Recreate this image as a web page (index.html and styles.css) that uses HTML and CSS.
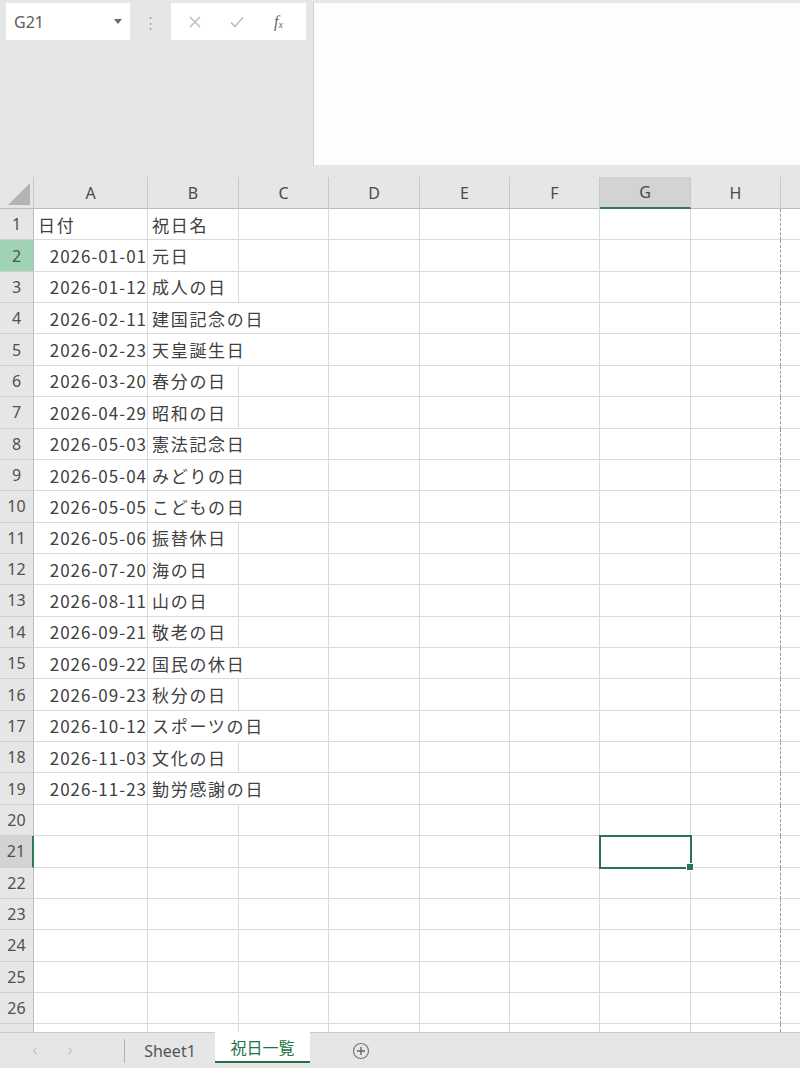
FILE: index.html
```html
<!DOCTYPE html>
<html lang="ja">
<head>
<meta charset="utf-8">
<title>祝日一覧</title>
<link rel="stylesheet" href="styles.css">
</head>
<body>
<div class="topbar">
  <div class="left-panel">
    <div class="name-row">
      <div class="name-box"><span>G21</span><span class="caret"></span></div>
      <div class="splitter">⋮</div>
      <div class="fx-tools">
        <svg class="tool" width="14" height="14" viewBox="0 0 14 14"><path d="M2 2 L12 12 M12 2 L2 12" stroke="#b8b8b8" stroke-width="1.4" fill="none"/></svg>
        <svg class="tool" width="16" height="14" viewBox="0 0 16 14"><path d="M2 7.5 L6 11.5 L14 2.5" stroke="#b8b8b8" stroke-width="1.4" fill="none"/></svg>
        <span class="fx">f<sub>x</sub></span>
      </div>
    </div>
  </div>
  <div class="formula"></div>
</div>

<div class="sheet">
  <div class="corner"><svg width="34" height="32" viewBox="0 0 34 32"><polygon points="8,28 30,28 30,6" fill="#b4b4b4"/></svg></div>
  <div class="ch">A</div><div class="ch">B</div><div class="ch">C</div><div class="ch">D</div><div class="ch">E</div><div class="ch">F</div><div class="ch ch-sel">G</div><div class="ch">H</div><div class="ch ch-last"></div>

  <div class="rh">1</div><div class="c">日付</div><div class="c">祝日名</div><div class="c"></div><div class="c"></div><div class="c"></div><div class="c"></div><div class="c"></div><div class="c brk"></div><div class="c end"></div>
  <div class="rh rh-green">2</div><div class="c num">2026-01-01</div><div class="c">元日</div><div class="c"></div><div class="c"></div><div class="c"></div><div class="c"></div><div class="c"></div><div class="c brk"></div><div class="c end"></div>
  <div class="rh">3</div><div class="c num">2026-01-12</div><div class="c">成人の日</div><div class="c"></div><div class="c"></div><div class="c"></div><div class="c"></div><div class="c"></div><div class="c brk"></div><div class="c end"></div>
  <div class="rh">4</div><div class="c num">2026-02-11</div><div class="c span2">建国記念の日</div><div class="c"></div><div class="c"></div><div class="c"></div><div class="c"></div><div class="c brk"></div><div class="c end"></div>
  <div class="rh">5</div><div class="c num">2026-02-23</div><div class="c span2">天皇誕生日</div><div class="c"></div><div class="c"></div><div class="c"></div><div class="c"></div><div class="c brk"></div><div class="c end"></div>
  <div class="rh">6</div><div class="c num">2026-03-20</div><div class="c">春分の日</div><div class="c"></div><div class="c"></div><div class="c"></div><div class="c"></div><div class="c"></div><div class="c brk"></div><div class="c end"></div>
  <div class="rh">7</div><div class="c num">2026-04-29</div><div class="c">昭和の日</div><div class="c"></div><div class="c"></div><div class="c"></div><div class="c"></div><div class="c"></div><div class="c brk"></div><div class="c end"></div>
  <div class="rh">8</div><div class="c num">2026-05-03</div><div class="c span2">憲法記念日</div><div class="c"></div><div class="c"></div><div class="c"></div><div class="c"></div><div class="c brk"></div><div class="c end"></div>
  <div class="rh">9</div><div class="c num">2026-05-04</div><div class="c span2">みどりの日</div><div class="c"></div><div class="c"></div><div class="c"></div><div class="c"></div><div class="c brk"></div><div class="c end"></div>
  <div class="rh">10</div><div class="c num">2026-05-05</div><div class="c span2">こどもの日</div><div class="c"></div><div class="c"></div><div class="c"></div><div class="c"></div><div class="c brk"></div><div class="c end"></div>
  <div class="rh">11</div><div class="c num">2026-05-06</div><div class="c">振替休日</div><div class="c"></div><div class="c"></div><div class="c"></div><div class="c"></div><div class="c"></div><div class="c brk"></div><div class="c end"></div>
  <div class="rh">12</div><div class="c num">2026-07-20</div><div class="c">海の日</div><div class="c"></div><div class="c"></div><div class="c"></div><div class="c"></div><div class="c"></div><div class="c brk"></div><div class="c end"></div>
  <div class="rh">13</div><div class="c num">2026-08-11</div><div class="c">山の日</div><div class="c"></div><div class="c"></div><div class="c"></div><div class="c"></div><div class="c"></div><div class="c brk"></div><div class="c end"></div>
  <div class="rh">14</div><div class="c num">2026-09-21</div><div class="c">敬老の日</div><div class="c"></div><div class="c"></div><div class="c"></div><div class="c"></div><div class="c"></div><div class="c brk"></div><div class="c end"></div>
  <div class="rh">15</div><div class="c num">2026-09-22</div><div class="c span2">国民の休日</div><div class="c"></div><div class="c"></div><div class="c"></div><div class="c"></div><div class="c brk"></div><div class="c end"></div>
  <div class="rh">16</div><div class="c num">2026-09-23</div><div class="c">秋分の日</div><div class="c"></div><div class="c"></div><div class="c"></div><div class="c"></div><div class="c"></div><div class="c brk"></div><div class="c end"></div>
  <div class="rh">17</div><div class="c num">2026-10-12</div><div class="c span2">スポーツの日</div><div class="c"></div><div class="c"></div><div class="c"></div><div class="c"></div><div class="c brk"></div><div class="c end"></div>
  <div class="rh">18</div><div class="c num">2026-11-03</div><div class="c">文化の日</div><div class="c"></div><div class="c"></div><div class="c"></div><div class="c"></div><div class="c"></div><div class="c brk"></div><div class="c end"></div>
  <div class="rh">19</div><div class="c num">2026-11-23</div><div class="c span2">勤労感謝の日</div><div class="c"></div><div class="c"></div><div class="c"></div><div class="c"></div><div class="c brk"></div><div class="c end"></div>
  <div class="rh">20</div><div class="c"></div><div class="c"></div><div class="c"></div><div class="c"></div><div class="c"></div><div class="c"></div><div class="c"></div><div class="c brk"></div><div class="c end"></div>
  <div class="rh rh-sel">21</div><div class="c"></div><div class="c"></div><div class="c"></div><div class="c"></div><div class="c"></div><div class="c"></div><div class="c sel"></div><div class="c brk"></div><div class="c end"></div>
  <div class="rh">22</div><div class="c"></div><div class="c"></div><div class="c"></div><div class="c"></div><div class="c"></div><div class="c"></div><div class="c"></div><div class="c brk"></div><div class="c end"></div>
  <div class="rh">23</div><div class="c"></div><div class="c"></div><div class="c"></div><div class="c"></div><div class="c"></div><div class="c"></div><div class="c"></div><div class="c brk"></div><div class="c end"></div>
  <div class="rh">24</div><div class="c"></div><div class="c"></div><div class="c"></div><div class="c"></div><div class="c"></div><div class="c"></div><div class="c"></div><div class="c brk"></div><div class="c end"></div>
  <div class="rh">25</div><div class="c"></div><div class="c"></div><div class="c"></div><div class="c"></div><div class="c"></div><div class="c"></div><div class="c"></div><div class="c brk"></div><div class="c end"></div>
  <div class="rh">26</div><div class="c"></div><div class="c"></div><div class="c"></div><div class="c"></div><div class="c"></div><div class="c"></div><div class="c"></div><div class="c brk"></div><div class="c end"></div>
  <div class="rh"></div><div class="c"></div><div class="c"></div><div class="c"></div><div class="c"></div><div class="c"></div><div class="c"></div><div class="c"></div><div class="c brk"></div><div class="c end"></div>
</div>

<div class="tabs">
  <div class="nav">
    <svg width="8" height="10" viewBox="0 0 8 10"><path d="M5.5 1.5 L2.5 5 L5.5 8.5" stroke="#c4c4c4" stroke-width="1.3" fill="none"/></svg>
    <svg width="8" height="10" viewBox="0 0 8 10"><path d="M2.5 1.5 L5.5 5 L2.5 8.5" stroke="#c4c4c4" stroke-width="1.3" fill="none"/></svg>
  </div>
  <div class="tab-sep"></div>
  <div class="tab">Sheet1</div>
  <div class="tab tab-active">祝日一覧</div>
  <div class="add">
    <svg width="18" height="18" viewBox="0 0 18 18"><circle cx="9" cy="9" r="7.5" stroke="#777" stroke-width="1.2" fill="none"/><path d="M9 5 V13 M5 9 H13" stroke="#666" stroke-width="1.4"/></svg>
  </div>
</div>
</body>
</html>
```

FILE: styles.css
```css
* {
  box-sizing: border-box;
}

html,
body {
  margin: 0;
  padding: 0;
}

body {
  width: 800px;
  height: 1068px;
  overflow: hidden;
  background: #e6e6e6;
  font-family: "Noto Sans CJK JP", "Noto Sans", sans-serif;
  color: #3c3c3c;
}

/* ---------- name box + formula bar ---------- */
.topbar {
  display: flex;
  height: 177px;
  padding-top: 3px;
}

.left-panel {
  width: 313px;
  flex: none;
}

.name-row {
  display: flex;
  height: 37px;
}

.name-box {
  width: 124px;
  margin-left: 6px;
  background: #fff;
  display: flex;
  align-items: center;
  padding-left: 8px;
  font-family: "Noto Sans", sans-serif;
  font-size: 16px;
  color: #5c5c5c;
}

.caret {
  margin-left: auto;
  margin-right: 8px;
  width: 0;
  height: 0;
  border-left: 4px solid transparent;
  border-right: 4px solid transparent;
  border-top: 5px solid #6a6a6a;
}

.splitter {
  width: 41px;
  display: flex;
  align-items: center;
  justify-content: center;
  color: #a8a8a8;
  font-size: 15px;
}

.fx-tools {
  width: 135px;
  background: #fff;
  display: flex;
  align-items: center;
  padding-left: 17px;
  gap: 27px;
}

.fx {
  font-family: "Liberation Serif", serif;
  font-style: italic;
  font-size: 16px;
  color: #666;
  margin-left: 2px;
}

.fx sub {
  font-size: 10px;
  vertical-align: -1px;
}

.formula {
  flex: 1;
  height: 162px;
  background: #fdfdfd;
  border-left: 1px solid #d2d2d2;
}

/* ---------- grid ---------- */
.sheet {
  height: 855px;
  overflow: hidden;
  background: #fff;
  display: grid;
  grid-template-columns: 34px 114px 91px 90px 91px 90px 90px 91px 90px 1fr;
  grid-template-rows: 32px;
  grid-auto-rows: 31.36px;
}

.corner {
  background: #e6e6e6;
  border-right: 1px solid #c8c8c8;
  border-bottom: 1px solid #bdbdbd;
}

.corner svg {
  display: block;
}

.ch {
  background: #e6e6e6;
  border-right: 1px solid #c8c8c8;
  border-bottom: 1px solid #bdbdbd;
  display: flex;
  align-items: center;
  justify-content: center;
  font-family: "Noto Sans", sans-serif;
  font-size: 16px;
  color: #4a4a4a;
}

.ch-sel {
  background: #d3d3d3;
  border-bottom: 2px solid #2f7a52;
}

.ch-last {
  border-right: none;
}

.rh {
  background: #e6e6e6;
  border-right: 1px solid #bdbdbd;
  border-bottom: 1px solid #cfcfcf;
  display: flex;
  align-items: center;
  justify-content: center;
  font-family: "Noto Sans", sans-serif;
  font-size: 16px;
  color: #505050;
}

.rh-green {
  background: #9fd3b3;
}

.rh-sel {
  background: #d3d3d3;
  border-right: 2px solid #2f7a52;
}

.c {
  border-right: 1px solid #dadada;
  border-bottom: 1px solid #dadada;
  display: flex;
  align-items: center;
  padding: 0 4px;
  font-size: 17px;
  letter-spacing: 1.7px;
  white-space: nowrap;
  color: #404040;
}

.num {
  justify-content: flex-end;
  padding-right: 0;
  letter-spacing: 1px;
}

.span2 {
  grid-column: span 2;
}

.brk {
  border-right: 1px dashed #9a9a9a;
}

.end {
  border-right: none;
}

.sel {
  position: relative;
  outline: 2px solid #2f7152;
  outline-offset: -1px;
}

.sel::after {
  content: "";
  position: absolute;
  right: -4px;
  bottom: -4px;
  width: 6px;
  height: 6px;
  background: #2f7152;
  border: 1px solid #fff;
}

/* ---------- sheet tabs ---------- */
.tabs {
  height: 36px;
  display: flex;
  align-items: stretch;
  border-top: 1px solid #c9c9c9;
}

.nav {
  width: 124px;
  display: flex;
  align-items: center;
  padding-left: 31px;
  gap: 27px;
}

.tab-sep {
  width: 1px;
  background: #b0b0b0;
  margin: 6px 0 5px;
}

.tab {
  width: 90px;
  display: flex;
  align-items: center;
  justify-content: center;
  font-family: "Noto Sans", "Noto Sans CJK JP", sans-serif;
  font-size: 16px;
  color: #555;
}

.tab-active {
  width: 95px;
  margin-top: -1px;
  background: #fff;
  color: #217346;
  font-family: "Noto Sans CJK JP", sans-serif;
  border-bottom: 2px solid #217346;
  margin-bottom: 5px;
}

.add {
  margin-left: 42px;
  display: flex;
  align-items: center;
}

.add svg {
  display: block;
}
```
